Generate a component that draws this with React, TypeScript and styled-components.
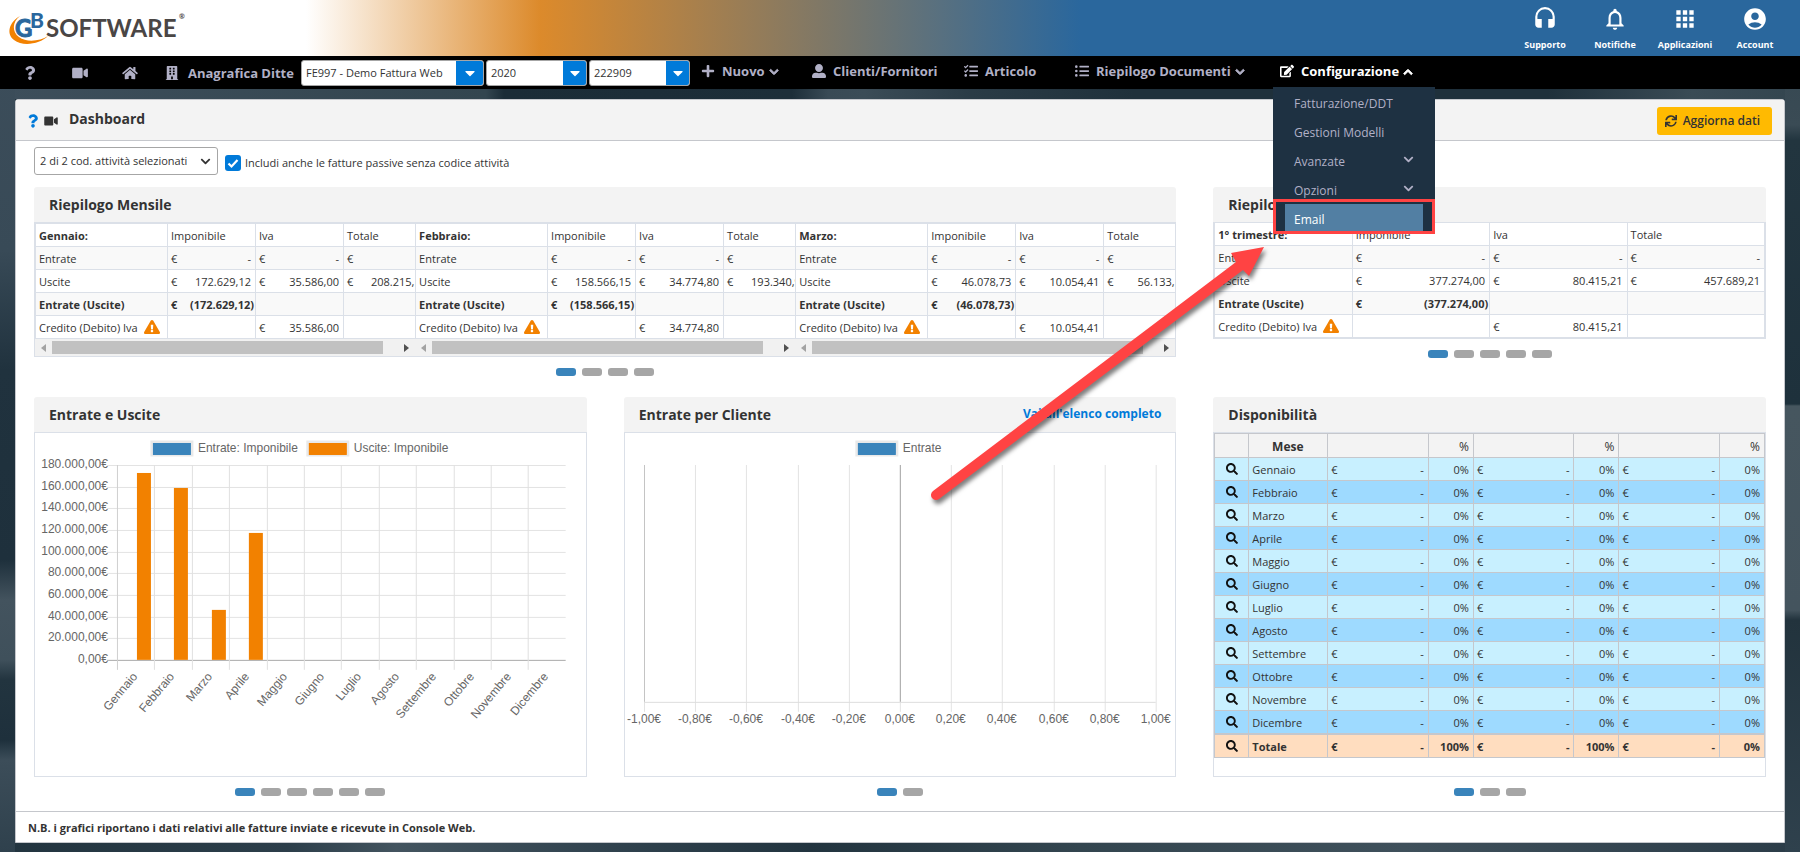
import React from 'react';
import styled, { createGlobalStyle, css } from 'styled-components';
import {
  FaQuestion, FaVideo, FaHome, FaBuilding, FaPlus, FaUserAlt, FaTasks, FaListUl, FaEdit,
  FaChevronDown, FaChevronUp, FaCaretDown, FaSync, FaExclamationTriangle, FaSearch,
} from 'react-icons/fa';
import { MdHeadset, MdNotificationsNone, MdApps, MdAccountCircle } from 'react-icons/md';

const color = {
  text: '#333333',
  line: '#dbe0e8',
  frame: '#c5c7cc',
  head: '#f3f3f3',
  blue: '#007ad9',
  nav: '#b1b0c6',
  orange: '#f28100',
  chartBlue: '#3a84bb',
  red: '#ff4343',
};

const GlobalStyle = createGlobalStyle`
  * { box-sizing: border-box; }
  body {
    margin: 0;
    background: #22343f;
    color: ${color.text};
    font-family: "Open Sans", "Noto Sans", sans-serif;
    font-size: 11px;
    line-height: 16px;
  }
  button, select, input { font: inherit; color: inherit; }
  a { color: inherit; text-decoration: none; }
`;

const Page = styled.div`
  position: relative;
  min-height: 100vh;
  padding-bottom: 9px;
  background:
    linear-gradient(180deg, #3d4e5b 0, #384a57 250px, #20323e 370px, #1e303c 560px, #43535e 600px, #3f505b 660px, #22343f 680px, #1e303c 740px, #3c4d59 760px, #2f414d 100%) left top / 15px 100% no-repeat,
    linear-gradient(180deg, #33454f 0, #3a4b55 125px, #22353f 140px, #1e313c 404px, #46565f 406px, #44545e 610px, #22333d 620px, #2f414d 100%) right top / 15px 100% no-repeat,
    linear-gradient(90deg, #3d4e5b 0, #33454f 27%, #1b2c37 28%, #1d2e39 44%, #394a55 46%, #3b4c57 48%, #2a3b46 54%, #1f303b 63%, #1f303b 86%, #3a4b55 94%, #33454f 100%) left 89px / 100% 10px no-repeat,
    linear-gradient(90deg, #22343f 0, #2c3e4a 16%, #43545f 22%, #30424e 34%, #22343f 45%, #33454f 60%, #3f505b 78%, #2b3c48 100%);
`;

/* ---------- top banner ---------- */

const Banner = styled.header`
  display: flex;
  justify-content: space-between;
  height: 56px;
  padding: 0 10px 0 6px;
  background: linear-gradient(90deg, #ffffff 17%, #dc8a2b 30%, #2a679d 60%);
`;

const LogoLink = styled.a`
  display: block;
  padding-top: 8px;
`;

const BannerLinks = styled.nav`
  display: grid;
  grid-template-columns: repeat(4, 70px);
  color: #ffffff;
`;

const BannerLink = styled.a`
  display: flex;
  flex-direction: column;
  align-items: center;
  gap: 5px;
  padding-top: 6px;
  font-size: 9px;
  font-weight: 700;
  line-height: 16px;
  svg { width: 26px; height: 26px; }
`;

/* ---------- navigation ---------- */

const Nav = styled.nav`
  display: flex;
  align-items: center;
  height: 33px;
  padding-left: 5px;
  background: #000000;
  color: ${color.nav};
  font-size: 13px;
  font-weight: 700;
`;

const NavIcon = styled.a<{ $width?: number }>`
  display: flex;
  justify-content: center;
  width: ${(p) => p.$width ?? 50}px;
  svg { width: 16px; height: 14px; }
`;

const NavLabel = styled.a`
  width: 113px;
  white-space: nowrap;
`;

const Pickers = styled.div`
  display: flex;
  gap: 2px;
`;

const Picker = styled.label<{ $width: number; $arrow: number }>`
  display: flex;
  width: ${(p) => p.$width}px;
  height: 26px;
  border: 1px solid #a6a6a6;
  border-radius: 3px;
  background: #ffffff;
  color: ${color.text};
  font-size: 11px;
  font-weight: 400;
  overflow: hidden;
  select {
    flex: 1;
    min-width: 0;
    padding: 0 0 0 4px;
    border: 0;
    background: transparent;
    appearance: none;
  }
  span {
    display: flex;
    align-items: center;
    justify-content: center;
    width: ${(p) => p.$arrow}px;
    margin: -1px;
    background: ${color.blue};
    color: #ffffff;
    font-size: 16px;
  }
`;

const Menu = styled.ul`
  display: grid;
  grid-template-columns: 111px 152px 111px 205px auto;
  margin: 0;
  padding: 0 0 4px 11px;
  list-style: none;
`;

const MenuItem = styled.li<{ $active?: boolean }>`
  position: relative;
  color: ${(p) => (p.$active ? '#ffffff' : 'inherit')};
`;

const MenuLink = styled.a`
  display: flex;
  align-items: center;
  gap: 7px;
  height: 29px;
  white-space: nowrap;
  svg { width: 14px; height: 14px; }
  svg.chevron {
    width: 10px;
    height: 10px;
    margin: 3px 0 0 -3px;
    stroke: currentColor;
    stroke-width: 50px;
  }
`;

const SubMenu = styled.ul`
  position: absolute;
  z-index: 2;
  top: 31px;
  left: -7px;
  width: 162px;
  margin: 0;
  padding: 2px 0 0;
  list-style: none;
  background: #1e3142;
  color: ${color.nav};
  font-size: 12px;
  font-weight: 400;
`;

const SubLink = styled.a`
  display: flex;
  align-items: center;
  justify-content: space-between;
  height: 29px;
  padding: 0 21px;
  svg { width: 11px; height: 11px; margin-bottom: 4px; }
`;

const Highlighted = styled.div`
  height: 35px;
  margin-top: -6px;
  padding: 2px 9px 0;
  border: 3px solid ${color.red};
  a {
    display: block;
    height: 27px;
    padding: 0 9px;
    background: #527fa3;
    color: #ffffff;
    line-height: 32px;
  }
`;

/* ---------- main panel ---------- */

const Panel = styled.main`
  margin: 10px 15px 0;
  border: 1px solid ${color.frame};
  border-radius: 3px 3px 0 0;
  background: #ffffff;
`;

const PanelHead = styled.div`
  display: flex;
  align-items: center;
  gap: 7px;
  height: 41px;
  padding: 2px 12px 0 12px;
  border-bottom: 1px solid ${color.frame};
  background: ${color.head};
  > svg { width: 14px; height: 12px; }
  > svg:first-child { width: 10px; height: 14px; margin-right: -1px; color: ${color.blue}; }
  h1 {
    flex: 1;
    margin: 0 0 4px 4px;
    font-size: 14px;
    line-height: 20px;
  }
`;

const RefreshButton = styled.button`
  display: flex;
  align-items: center;
  gap: 6px;
  height: 28px;
  padding: 0 12px 0 8px;
  border: 0;
  border-radius: 3px;
  background: #ffba01;
  font-size: 12px;
  font-weight: 600;
`;

const Filters = styled.form`
  display: flex;
  gap: 7px;
  padding: 6px 18px 12px;
`;

const ActivityPicker = styled.label`
  display: flex;
  align-items: center;
  width: 184px;
  height: 28px;
  padding-right: 6px;
  border: 1px solid #a6a6a6;
  border-radius: 3px;
  select {
    flex: 1;
    min-width: 0;
    padding: 0 0 0 5px;
    border: 0;
    background: transparent;
    appearance: none;
  }
`;

const CheckLabel = styled.label`
  display: flex;
  align-items: center;
  gap: 4px;
  padding-top: 4px;
  input {
    width: 16px;
    height: 16px;
    margin: 0;
    appearance: none;
    border-radius: 3px;
    background: ${color.blue} url("data:image/svg+xml,%3Csvg xmlns='http://www.w3.org/2000/svg' viewBox='0 0 16 16'%3E%3Cpath d='M3.500 8.500l3 3 6-6.500' fill='none' stroke='white' stroke-width='2.200'/%3E%3C/svg%3E") center / 16px no-repeat;
  }
`;

const Cards = styled.div`
  display: grid;
  grid-template-columns: repeat(3, minmax(0, 1fr));
  gap: 21px 37px;
  padding: 0 18px 15px;
`;

const CardColumn = styled.section<{ $wide?: boolean }>`
  display: flex;
  flex-direction: column;
  ${(p) => p.$wide && css`grid-column: span 2;`}
`;

const CardHead = styled.div`
  display: flex;
  align-items: center;
  justify-content: space-between;
  height: 35px;
  padding: 0 15px;
  border-radius: 3px 3px 0 0;
  background: ${color.head};
  h2 {
    margin: 0;
    font-size: 14px;
    line-height: 20px;
  }
  a {
    margin-bottom: 2px;
    color: ${color.blue};
    font-size: 12px;
    font-weight: 700;
  }
`;

const CardBody = styled.div<{ $tall?: boolean }>`
  min-height: ${(p) => (p.$tall ? 345 : 0)}px;
  border: 1px solid ${color.line};
`;

const Dots = styled.div`
  display: flex;
  justify-content: center;
  gap: 6px;
  margin-top: 11px;
`;

const Dot = styled.button<{ $on?: boolean }>`
  width: 20px;
  height: 8px;
  padding: 0;
  border: 0;
  border-radius: 3px;
  background: ${(p) => (p.$on ? color.chartBlue : '#a6a6a6')};
`;

const Months = styled.div`
  display: grid;
  grid-template-columns: repeat(3, minmax(0, 1fr));
`;

const MonthPane = styled.div`
  overflow: hidden;
`;

const SummaryTable = styled.table<{ $scrolling?: boolean }>`
  width: ${(p) => (p.$scrolling ? '397px' : '100%')};
  table-layout: fixed;
  border-collapse: separate;
  border-spacing: 0;
  border: solid ${color.line};
  border-width: ${(p) => (p.$scrolling ? '1px 0 0 1px' : '0 0 0 1px')};
  th, td {
    height: 23px;
    padding: 2px 4px 0 3px;
    border: solid ${color.line};
    border-width: 0 1px 1px 0;
    font-weight: 400;
    text-align: left;
    white-space: nowrap;
  }
  th:first-child { width: ${(p) => (p.$scrolling ? '132px' : '25%')}; }
  tr.strong th, tr.strong td, thead th:first-child { font-weight: 700; }
  tr.strong td { padding-right: 1px; }
`;

const SummaryLine = styled.tr<{ $shaded?: boolean }>`
  background: ${(p) => (p.$shaded ? '#f9f9f9' : '#ffffff')};
`;

const Money = styled.span`
  display: flex;
  justify-content: space-between;
`;

const Warning = styled(FaExclamationTriangle)`
  width: 16px;
  height: 16px;
  margin: -4px 0 -3px 6px;
  color: ${color.orange};
`;

const ScrollBar = styled.div`
  display: flex;
  align-items: center;
  justify-content: space-between;
  height: 17px;
  background: #f1f1f1;
`;

const ScrollThumb = styled.div`
  flex: 1;
  height: 13px;
  margin-right: 15px;
  background: #c1c1c1;
`;

const ScrollArrow = styled.button<{ $next?: boolean }>`
  width: 17px;
  height: 17px;
  padding: 0;
  border: 0;
  background: transparent;
  &::before {
    content: '';
    display: block;
    width: 0;
    margin: auto;
    border: 4px solid transparent;
    ${(p) => (p.$next
      ? css`border-left: 5px solid #505050; border-right: 0;`
      : css`border-right: 5px solid #a3a3a3; border-left: 0;`)}
  }
`;

const CashTable = styled.table`
  width: 100%;
  table-layout: fixed;
  border-collapse: separate;
  border-spacing: 0;
  border: solid ${color.frame};
  border-width: 1px 0 0 1px;
  th, td {
    height: 23px;
    padding: 2px 4px 0 3px;
    border: solid ${color.frame};
    border-width: 0 1px 1px 0;
    font-weight: 400;
    text-align: left;
    white-space: nowrap;
  }
  thead th { height: 24px; background: ${color.head}; font-size: 12px; text-align: right; }
  thead th:nth-child(2) { font-weight: 700; text-align: center; }
  tbody tr { background: #c8f0ff; }
  tbody tr:nth-child(even) { background: #9edaff; }
  tbody tr:last-child > * { height: 24px; border-bottom-width: 2px; }
  tfoot tr { background: #ffddbf; }
  tfoot th, tfoot td { font-weight: 700; }
  .icon { width: 34px; }
  .month { width: 79px; }
  .share { width: 45px; text-align: right; }
  td.icon { padding: 0; text-align: center; }
`;

const SearchButton = styled.button`
  display: block;
  margin: auto;
  padding: 0;
  border: 0;
  background: transparent;
  color: #111111;
  line-height: 12px;
  svg { display: block; width: 12px; height: 12px; }
`;

const PanelFoot = styled.footer`
  height: 31px;
  padding-left: 12px;
  border-top: 1px solid ${color.frame};
  font-size: 11px;
  font-weight: 700;
  line-height: 32px;
`;

const ChartSvg = styled.svg`
  display: block;
  width: 100%;
  height: auto;
  fill: #666666;
  font-family: "Liberation Sans", Arial, sans-serif;
  font-size: 12px;
`;

const Pointer = styled.svg`
  position: absolute;
  z-index: 3;
  top: 240px;
  left: 925px;
  width: 350px;
  height: 270px;
  pointer-events: none;
  filter: drop-shadow(2px 4px 2px rgba(0, 0, 0, 0.5));
`;

/* ---------- data ---------- */

const monthNames = [
  'Gennaio', 'Febbraio', 'Marzo', 'Aprile', 'Maggio', 'Giugno',
  'Luglio', 'Agosto', 'Settembre', 'Ottobre', 'Novembre', 'Dicembre',
];

type Summary = { title: string; taxable: string; vat: string; total: string };

const months: Summary[] = [
  { title: 'Gennaio:', taxable: '172.629,12', vat: '35.586,00', total: '208.215,12' },
  { title: 'Febbraio:', taxable: '158.566,15', vat: '34.774,80', total: '193.340,95' },
  { title: 'Marzo:', taxable: '46.078,73', vat: '10.054,41', total: '56.133,14' },
];

const quarter: Summary = {
  title: '1° trimestre:', taxable: '377.274,00', vat: '80.415,21', total: '457.689,21',
};

/* ---------- parts ---------- */

const Euro = ({ value }: { value: string }) => (
  <Money><span>€</span><span>{value}</span></Money>
);

function SummaryRow(props: {
  label: string; values: string[]; shaded?: boolean; strong?: boolean; warning?: boolean;
}) {
  return (
    <SummaryLine $shaded={props.shaded} className={props.strong ? 'strong' : undefined}>
      <th scope="row">{props.label}{props.warning && <Warning />}</th>
      {props.values.map((v, i) => <td key={i}>{v && <Euro value={v} />}</td>)}
    </SummaryLine>
  );
}

function SummaryGrid({ data, scrolling }: { data: Summary; scrolling?: boolean }) {
  return (
    <SummaryTable $scrolling={scrolling}>
      <thead>
        <tr><th>{data.title}</th><th>Imponibile</th><th>Iva</th><th>Totale</th></tr>
      </thead>
      <tbody>
        <SummaryRow label="Entrate" values={['-', '-', '-']} shaded />
        <SummaryRow label="Uscite" values={[data.taxable, data.vat, data.total]} />
        <SummaryRow label="Entrate (Uscite)" values={[`(${data.taxable})`, '', '']} shaded strong />
        <SummaryRow label="Credito (Debito) Iva" values={['', data.vat, '']} warning />
      </tbody>
    </SummaryTable>
  );
}

function Pager({ count }: { count: number }) {
  return (
    <Dots>
      {Array.from({ length: count }, (_, i) => (
        <Dot key={i} type="button" $on={i === 0} aria-label={`Pagina ${i + 1}`} />
      ))}
    </Dots>
  );
}

function Legend({ x, fill, label }: { x: number; fill: string; label: string }) {
  return (
    <g>
      <rect x={x + 1} y={10} width={40} height={13} fill={fill} stroke="#e9e9e9" strokeWidth={3} />
      <rect x={x + 2} y={11} width={38} height={12} fill={fill} />
      <text x={x + 47} y={20}>{label}</text>
    </g>
  );
}

function MonthlyChart() {
  const left = 83;
  const top = 33;
  const bottom = 228;
  const step = 374 / 10;
  const yStep = (bottom - top) / 9;
  const bars = [172629.12, 158566.15, 46078.73, 117000];
  const scale = (bottom - top) / 180000;
  return (
    <ChartSvg viewBox="1 1 551 340" role="img" aria-label="Entrate e Uscite">
      <Legend x={117} fill={color.chartBlue} label="Entrate: Imponibile" />
      <Legend x={273} fill={color.orange} label="Uscite: Imponibile" />
      {Array.from({ length: 10 }, (_, i) => {
        const y = Math.round(top + i * yStep);
        const amount = (9 - i) * 20;
        return (
          <g key={i}>
            <rect x={left - 10} y={y} width={459} height={1} fill={i === 9 ? '#a9a9a9' : '#e3e3e3'} />
            <text x={left - 9} y={y + 3} textAnchor="end">{amount ? `${amount}.000,00€` : '0,00€'}</text>
          </g>
        );
      })}
      {monthNames.map((name, i) => {
        const x = Math.round(left + i * step);
        return (
          <g key={name}>
            <rect x={x} y={top} width={1} height={bottom - top + 10} fill={i ? '#e0e0e0' : '#cfcfcf'} />
            <text
              transform={`translate(${x + 21} ${bottom + 17}) rotate(-50)`}
              textAnchor="end"
            >
              {name}
            </text>
          </g>
        );
      })}
      {bars.map((value, i) => (
        <rect
          key={i}
          x={Math.round(left + i * step + 20)}
          y={Math.round(bottom - value * scale)}
          width={14}
          height={Math.round(value * scale)}
          fill={color.orange}
        />
      ))}
    </ChartSvg>
  );
}

function CustomerChart() {
  return (
    <ChartSvg viewBox="1 1 551 340" role="img" aria-label="Entrate per Cliente">
      <Legend x={232} fill={color.chartBlue} label="Entrate" />
      {Array.from({ length: 11 }, (_, i) => {
        const x = Math.round(20 + i * 51.2);
        const value = ((i - 5) / 5).toFixed(2).replace('.', ',');
        return (
          <g key={i}>
            <rect x={x} y={33} width={1} height={247} fill="#e3e3e3" />
            {i % 5 === 0 && i < 10 && <rect x={x} y={33} width={1} height={237} fill={i ? '#a9a9a9' : '#c4c4c4'} />}
            <text x={x} y={291} textAnchor="middle">{`${value}€`}</text>
          </g>
        );
      })}
      <rect x={20} y={270} width={512} height={1} fill="#dddddd" />
    </ChartSvg>
  );
}

function CashCells({ shares }: { shares: string[] }) {
  return (
    <>
      {shares.map((share, i) => (
        <React.Fragment key={i}>
          <td><Euro value="-" /></td>
          <td className="share">{share}</td>
        </React.Fragment>
      ))}
    </>
  );
}

function CashGrid() {
  return (
    <CashTable>
      <thead>
        <tr>
          <th className="icon" /><th className="month">Mese</th>
          <th /><th className="share">%</th>
          <th /><th className="share">%</th>
          <th /><th className="share">%</th>
        </tr>
      </thead>
      <tbody>
        {monthNames.map((name) => (
          <tr key={name}>
            <td className="icon">
              <SearchButton type="button" aria-label={`Dettaglio ${name}`}><FaSearch /></SearchButton>
            </td>
            <th scope="row">{name}</th>
            <CashCells shares={['0%', '0%', '0%']} />
          </tr>
        ))}
      </tbody>
      <tfoot>
        <tr>
          <td className="icon">
            <SearchButton type="button" aria-label="Dettaglio totale"><FaSearch /></SearchButton>
          </td>
          <th scope="row">Totale</th>
          <CashCells shares={['100%', '100%', '0%']} />
        </tr>
      </tfoot>
    </CashTable>
  );
}

function Logo() {
  return (
    <svg width="184" height="40" viewBox="0 0 184 40" role="img" aria-label="GB Software" fontFamily="Lato, sans-serif">
      <path d="M14 8C3 14 0 26 8 32C17 39 34 36 42 28C34 33 21 35 13 29C6 24 6 14 14 8Z" fill={color.orange} />
      <text x="9" y="29" fontSize="24" fontWeight="700" fill="#2a679d" stroke="#2a679d">G</text>
      <text x="24" y="20" fontSize="21" fontWeight="900" fill="#2a679d" stroke="#ffffff" strokeWidth="2" paintOrder="stroke">B</text>
      <text x="40" y="29" fontSize="24" fontWeight="700" fill="#4a4645">SOFTWARE</text>
      <text x="173" y="11" fontSize="7" fontWeight="700" fill="#4a4645">®</text>
    </svg>
  );
}

function NavPicker(props: { label: string; value: string; width: number; arrow: number }) {
  return (
    <Picker $width={props.width} $arrow={props.arrow}>
      <select aria-label={props.label}><option>{props.value}</option></select>
      <span><FaCaretDown /></span>
    </Picker>
  );
}

export default function App() {
  return (
    <Page>
      <GlobalStyle />
      <Banner>
        <LogoLink href="#"><Logo /></LogoLink>
        <BannerLinks>
          <BannerLink href="#"><MdHeadset />Supporto</BannerLink>
          <BannerLink href="#"><MdNotificationsNone />Notifiche</BannerLink>
          <BannerLink href="#"><MdApps />Applicazioni</BannerLink>
          <BannerLink href="#"><MdAccountCircle />Account</BannerLink>
        </BannerLinks>
      </Banner>

      <Nav>
        <NavIcon href="#" aria-label="Aiuto"><FaQuestion /></NavIcon>
        <NavIcon href="#" aria-label="Video"><FaVideo /></NavIcon>
        <NavIcon href="#" aria-label="Home"><FaHome /></NavIcon>
        <NavIcon href="#" aria-label="Ditte" $width={33}><FaBuilding /></NavIcon>
        <NavLabel href="#">Anagrafica Ditte</NavLabel>
        <Pickers>
          <NavPicker label="Ditta" value="FE997 - Demo Fattura Web" width={183} arrow={28} />
          <NavPicker label="Anno" value="2020" width={101} arrow={24} />
          <NavPicker label="Codice attività" value="222909" width={101} arrow={24} />
        </Pickers>
        <Menu>
          <MenuItem>
            <MenuLink href="#"><FaPlus />Nuovo<FaChevronDown className="chevron" /></MenuLink>
          </MenuItem>
          <MenuItem><MenuLink href="#"><FaUserAlt />Clienti/Fornitori</MenuLink></MenuItem>
          <MenuItem><MenuLink href="#"><FaTasks />Articolo</MenuLink></MenuItem>
          <MenuItem>
            <MenuLink href="#"><FaListUl />Riepilogo Documenti<FaChevronDown className="chevron" /></MenuLink>
          </MenuItem>
          <MenuItem $active>
            <MenuLink href="#"><FaEdit />Configurazione<FaChevronUp className="chevron" /></MenuLink>
            <SubMenu>
              <li><SubLink href="#">Fatturazione/DDT</SubLink></li>
              <li><SubLink href="#">Gestioni Modelli</SubLink></li>
              <li><SubLink href="#">Avanzate<FaChevronDown /></SubLink></li>
              <li><SubLink href="#">Opzioni<FaChevronDown /></SubLink></li>
              <li><Highlighted><a href="#">Email</a></Highlighted></li>
            </SubMenu>
          </MenuItem>
        </Menu>
      </Nav>

      <Panel>
        <PanelHead>
          <FaQuestion />
          <FaVideo />
          <h1>Dashboard</h1>
          <RefreshButton type="button"><FaSync />Aggiorna dati</RefreshButton>
        </PanelHead>

        <Filters>
          <ActivityPicker>
            <select aria-label="Codici attività"><option>2 di 2 cod. attività selezionati</option></select>
            <FaChevronDown />
          </ActivityPicker>
          <CheckLabel>
            <input type="checkbox" defaultChecked />
            Includi anche le fatture passive senza codice attività
          </CheckLabel>
        </Filters>

        <Cards>
          <CardColumn $wide>
            <CardHead><h2>Riepilogo Mensile</h2></CardHead>
            <CardBody>
              <Months>
                {months.map((m) => (
                  <MonthPane key={m.title}>
                    <SummaryGrid data={m} scrolling />
                    <ScrollBar>
                      <ScrollArrow type="button" aria-label="Indietro" />
                      <ScrollThumb />
                      <ScrollArrow type="button" aria-label="Avanti" $next />
                    </ScrollBar>
                  </MonthPane>
                ))}
              </Months>
            </CardBody>
            <Pager count={4} />
          </CardColumn>

          <CardColumn>
            <CardHead><h2>Riepilogo Trimestrale</h2></CardHead>
            <CardBody><SummaryGrid data={quarter} /></CardBody>
            <Pager count={5} />
          </CardColumn>

          <CardColumn>
            <CardHead><h2>Entrate e Uscite</h2></CardHead>
            <CardBody $tall><MonthlyChart /></CardBody>
            <Pager count={6} />
          </CardColumn>

          <CardColumn>
            <CardHead><h2>Entrate per Cliente</h2><a href="#">Vai all'elenco completo</a></CardHead>
            <CardBody $tall><CustomerChart /></CardBody>
            <Pager count={2} />
          </CardColumn>

          <CardColumn>
            <CardHead><h2>Disponibilità</h2></CardHead>
            <CardBody $tall><CashGrid /></CardBody>
            <Pager count={3} />
          </CardColumn>
        </Cards>

        <PanelFoot>N.B. i grafici riportano i dati relativi alle fatture inviate e ricevute in Console Web.</PanelFoot>
      </Panel>

      <Pointer viewBox="0 0 350 270" aria-hidden="true">
        <path d="M8 251 L311 22 L306 13 L339 7 L324 36 L318 30 L14 259 A5 5 0 0 1 8 251Z" fill={color.red} />
      </Pointer>
    </Page>
  );
}
